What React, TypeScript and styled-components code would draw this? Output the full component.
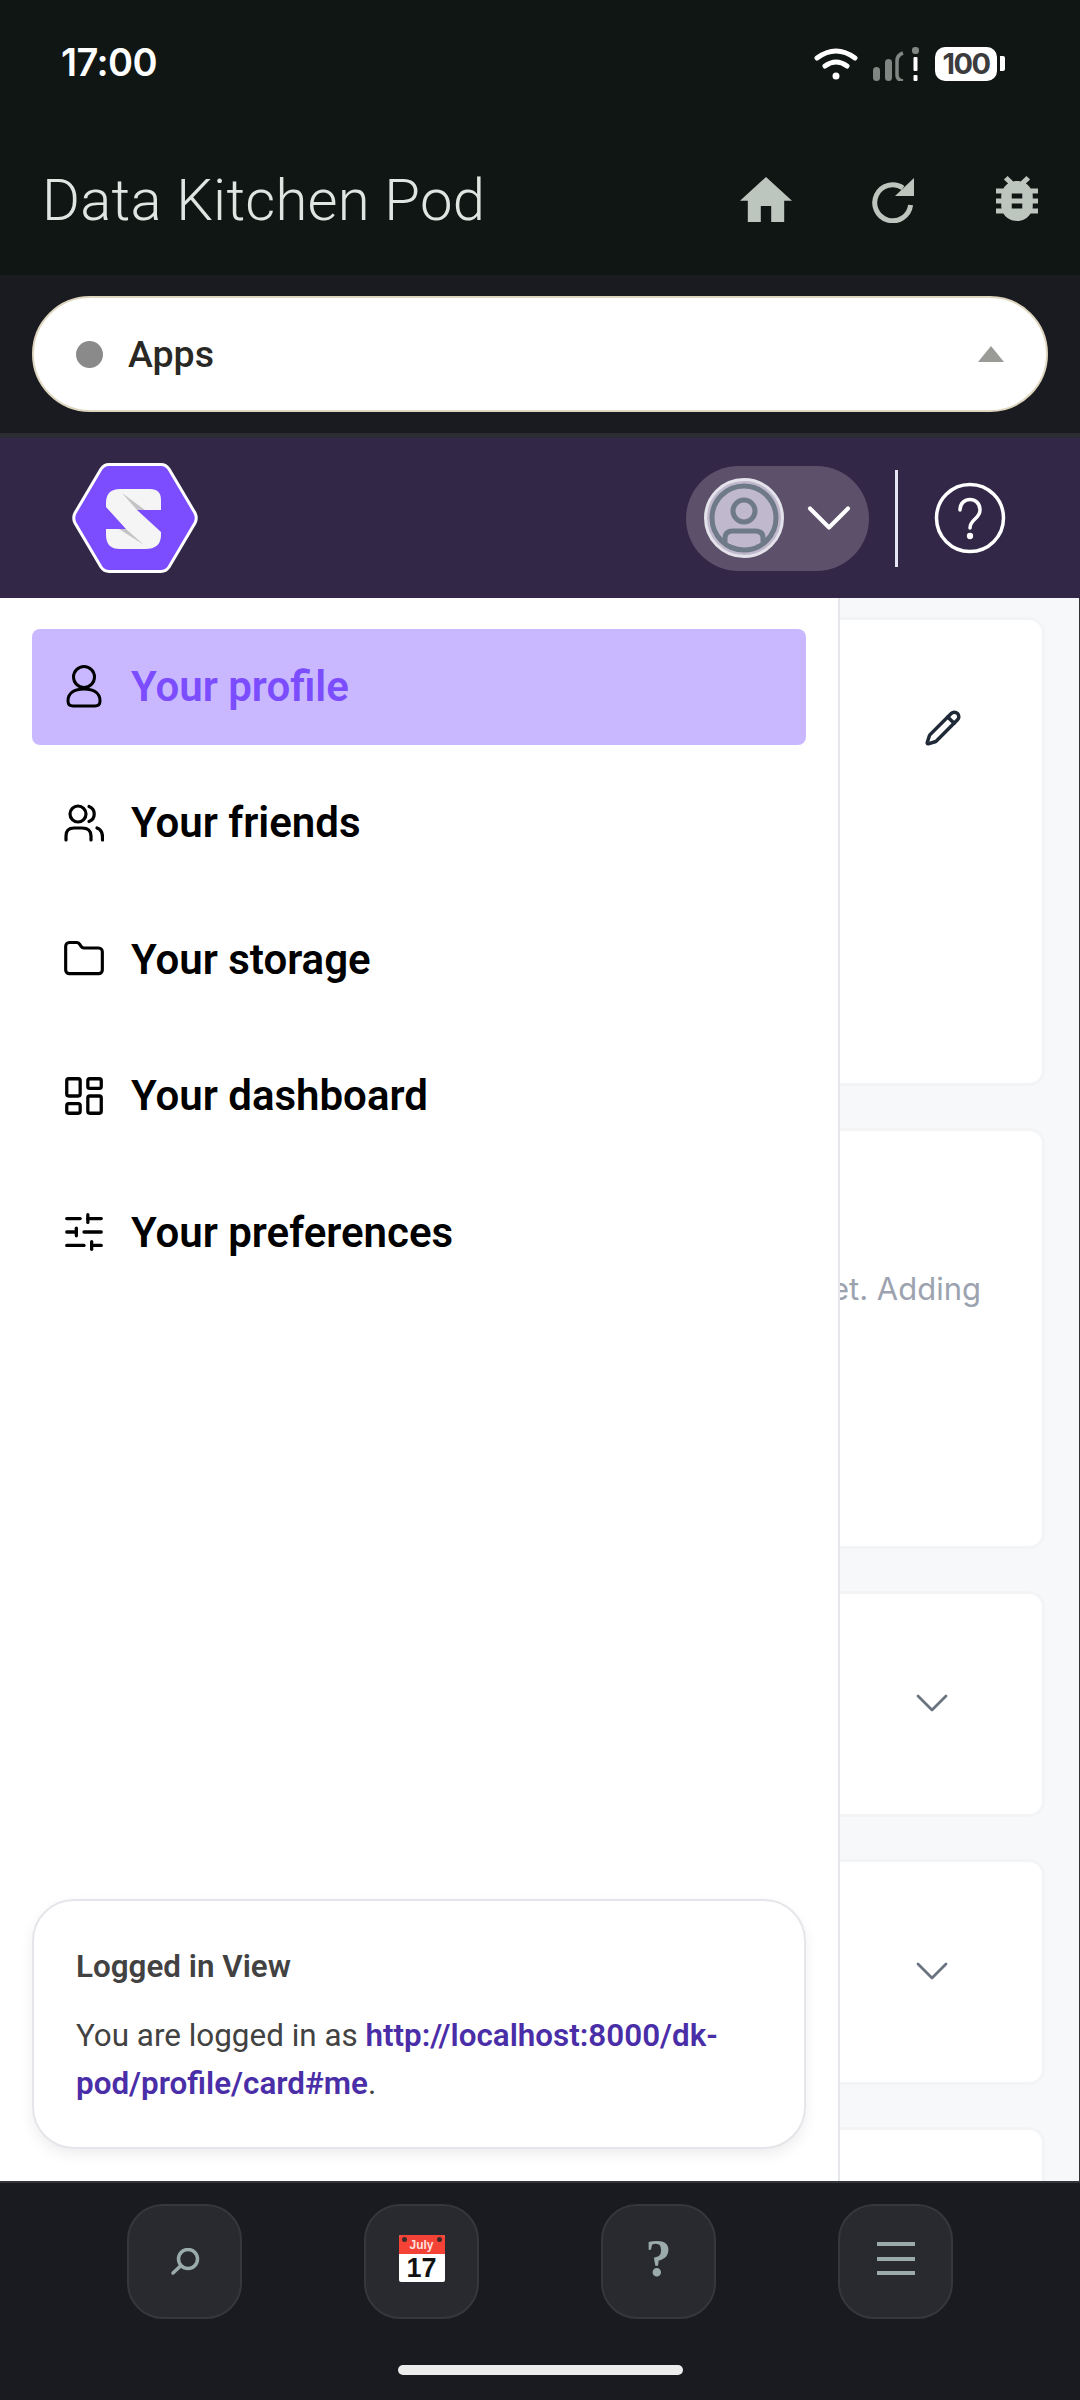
import React from "react";
import styled, { createGlobalStyle } from "styled-components";
import { Pencil, ChevronDown, Folder, LayoutDashboard, SlidersHorizontal } from "lucide-react";

const Global = createGlobalStyle`
  html, body { margin: 0; padding: 0; background: #1a1b20; }
  * { box-sizing: border-box; }
  body { font-family: Roboto, "Liberation Sans", sans-serif; }
`;

const Page = styled.div`
  width: 1080px; height: 2400px; display: flex; flex-direction: column; overflow: hidden;
`;
const TopBlock = styled.header`
  height: 275px; background: #101613; display: flex; flex-direction: column; flex: none;
`;
const StatusBar = styled.div`
  height: 124px; padding: 0 75px 0 61px; display: flex; align-items: center; justify-content: space-between;
`;
const Time = styled.span`
  font-family: Inter, sans-serif; font-size: 38px; font-weight: 600; color: #fff; letter-spacing: -0.6px;
`;
const StatusIcons = styled.div`
  display: flex; align-items: center; gap: 15px; margin-top: 3px;
`;
const Battery = styled.div`
  display: flex; align-items: center; gap: 3px; margin-left: 1px;
`;
const BatteryBody = styled.span`
  width: 62px; height: 34px; border-radius: 10px; background: #fff; color: #3c3c3e;
  font-family: Inter, sans-serif; font-size: 29px; font-weight: 700; letter-spacing: -1.5px;
  display: flex; align-items: center; justify-content: center;
`;
const BatteryCap = styled.span`
  width: 5px; height: 15px; background: #fff; border-radius: 0 2px 2px 0;
`;
const TitleBar = styled.div`
  height: 151px; padding: 0 42px 0 42px; display: flex; align-items: center; justify-content: space-between;
`;
const Title = styled.h1`
  margin: 0; font-size: 58px; font-weight: 300; color: #dfe5e0; letter-spacing: 0.25px;
`;
const TitleIcons = styled.div`
  display: flex; align-items: center; gap: 80px;
`;
const SelectStrip = styled.div`
  height: 163px; flex: none; background: #1a1b20; padding: 21px 32px 0;
  border-bottom: 5px solid #2b2d32;
`;
const SelectPill = styled.div`
  height: 116px; border-radius: 58px; background: #fff; border: 2px solid #ded6bf;
  padding: 0 42px; display: flex; align-items: center;
`;
const Dot = styled.span`
  width: 27px; height: 27px; border-radius: 50%; background: #8a8a8a; margin-right: 25px;
`;
const SelectLabel = styled.span`
  font-size: 37.5px; font-weight: 500; color: #2a2824; flex: 1;
`;
const Caret = styled.span`
  width: 0; height: 0; border-left: 13px solid transparent; border-right: 13px solid transparent;
  border-bottom: 16px solid #9a9a96;
`;
const PurpleHeader = styled.div`
  height: 160px; flex: none; background: #332748; padding: 0 74px 0 72px;
  display: flex; align-items: center;
`;
const ProfilePill = styled.div`
  width: 183px; height: 105px; border-radius: 53px; background: #5d506b; margin-left: auto;
  display: flex; align-items: center; padding-left: 18px; gap: 7px;
`;
const Divider = styled.span`
  width: 3px; height: 97px; background: #e6e6f2; margin: 0 36px 0 26px;
`;
const Body = styled.div`
  flex: 1; position: relative; overflow: hidden; background: #f7f8fa;
  border-right: 1px solid #333; padding: 19px 34px 0 20px; display: flex; flex-direction: column; gap: 42px;
`;
const Card = styled.section<{ $h: number }>`
  height: ${(p) => p.$h}px; flex: none; background: #fff; border: 3px solid #f3f4f6; border-radius: 16px;
  display: flex; justify-content: flex-end; position: relative;
`;
const EditSlot = styled.div`
  padding: 89px 80px 0 0; color: #1f2937; display: flex;
`;
const NoteText = styled.p`
  margin: 0; padding: 136px 61px 0 0; font-family: Inter, sans-serif; font-size: 31px; color: #9ca3af; white-space: nowrap; line-height: 44px;
`;
const ChevronSlot = styled.div`
  padding-right: 82px; color: #6b7280; display: flex; align-items: center; margin-bottom: 3px;
`;
const Drawer = styled.aside`
  position: absolute; left: 0; top: 0; bottom: 0; width: 840px; background: #fff;
  border-right: 2px solid #e5e7eb; padding: 31px 32px 32px; display: flex; flex-direction: column;
`;
const NavList = styled.nav`
  display: flex; flex-direction: column; gap: 20.5px;
`;
const NavItem = styled.a<{ $active?: boolean }>`
  height: 116px; border-radius: 8px; padding: 0 0 2px 33px; display: flex; align-items: center; gap: 28px;
  background: ${(p) => (p.$active ? "#c9b8ff" : "transparent")};
  color: ${(p) => (p.$active ? "#7c4dff" : "#000")};
  font-size: 42px; font-weight: 600;
`;
const NavIcon = styled.span`
  width: 38px; height: 44px; color: #000; display: flex; align-items: center; justify-content: center; flex: none;
  svg { flex: none; }
`;
const LoginCard = styled.div`
  margin-top: auto; height: 250px; border: 2px solid #e5e5ea; border-radius: 42px; background: #fff;
  padding: 46px 42px 0; box-shadow: 0 6px 14px rgba(0,0,0,0.07); color: #424242;
`;
const LoginTitle = styled.h2`
  margin: 0 0 25px; font-size: 31.4px; line-height: 40px; font-weight: 600; color: #424242;
`;
const LoginText = styled.p`
  margin: 0; font-size: 31.4px; line-height: 48px; font-weight: 400;
`;
const LoginLink = styled.a`
  color: #4a2ea8; font-weight: 600;
`;
const BottomBar = styled.footer`
  height: 219px; flex: none; background: #1a1b20; border-top: 2px solid #33353a; display: flex; flex-direction: column; align-items: center;
`;
const BottomRow = styled.div`
  width: 100%; padding: 21px 0 0 127px; display: flex; gap: 122px;
`;
const BottomButton = styled.button`
  width: 115px; height: 115px; border-radius: 36px; border: 2px solid #35373c; background: #292a2f; padding: 0;
  display: flex; align-items: center; justify-content: center; color: #9aabaa; flex: none;
`;
const QuestionGlyph = styled.span`
  font-family: "Liberation Serif", serif; font-weight: 700; font-size: 52px; line-height: 1; margin-bottom: 6px;
`;
const Calendar = styled.div`
  width: 46px; height: 47px; border-radius: 2px; background: #fff; position: relative; display: flex; flex-direction: column; margin-bottom: 7px;
`;
const CalRing = styled.span<{ $side: "left" | "right" }>`
  position: absolute; top: 2px; ${(p) => p.$side}: 3px; width: 5px; height: 5px; border-radius: 50%; background: #3a2a2a;
`;
const CalTop = styled.div`
  height: 19px; background: #f44336; color: #ffe0dd; font-size: 12px; font-weight: 600; line-height: 20px; text-align: center; border-radius: 2px 2px 0 0;
`;
const CalDay = styled.div`
  flex: 1; color: #111; font-size: 27px; font-weight: 600; line-height: 28px; text-align: center;
`;
const MenuWrap = styled.span`
  display: flex; margin-bottom: 6px;
`;
const HomeIndicator = styled.div`
  width: 285px; height: 10px; border-radius: 5px; background: #ececec; margin-top: 46px;
`;

const Logo = () => (
  <svg width="126" height="112" viewBox="72 463 126 112">
    <path d="M109 465.5 H161 Q166 465.5 169 470 L195 514 Q197.5 519 195 524 L169 568 Q166 572.5 161 572.5 H109 Q104 572.5 101 568 L75 524 Q72.5 519 75 514 L101 470 Q104 465.5 109 465.5Z" fill="#7c4dff" stroke="#fff" strokeWidth="3" />
    <path d="M120 490 H150 Q161 490 161 501 V511 H137 L161 533 V536 Q161 550 145 550 H120 Q106 550 106 536 V530 H126 L106 508 V504 Q106 490 120 490Z" fill="#f5f5f5" />
    <path d="M122 494 L145 511 H137Z M126 530 L144 546 L119 530Z" fill="#c4c4c6" />
  </svg>
);

const Avatar = () => (
  <svg width="80" height="80" viewBox="0 0 80 80" style={{ flex: "none" }}>
    <circle cx="40" cy="40" r="38.5" fill="#c0b8cc" stroke="#e4e2ea" strokeWidth="3" />
    <circle cx="40" cy="40" r="32" fill="none" stroke="#6f7a88" strokeWidth="5" />
    <circle cx="40" cy="33" r="11" fill="none" stroke="#6f7a88" strokeWidth="5" />
    <path d="M21 64 V60 Q21 53 29 53 H51 Q59 53 59 60 V64" fill="none" stroke="#6f7a88" strokeWidth="5" />
    <path d="M25 62 Q25 57 30 57 H50 Q55 57 55 62 V66 H25Z" fill="#c0b8cc" />
  </svg>
);

const HelpCircle = () => (
  <svg width="72" height="72" viewBox="0 0 72 72" fill="none" stroke="#fff" strokeWidth="3.5" strokeLinecap="round">
    <circle cx="36" cy="36" r="33.5" />
    <path d="M26 28 C26 14 46 14 46 28 C46 37 36 37 36 46" />
    <circle cx="36" cy="54" r="1.4" fill="#fff" />
  </svg>
);

const Wifi = () => (
  <svg width="44" height="34" viewBox="0 0 44 34" fill="none" stroke="#fff" strokeLinecap="round" strokeWidth="5">
    <path d="M3 11 Q22 -3 41 11" />
    <path d="M11 19 Q22 11 33 19" />
    <circle cx="22" cy="29" r="2.5" fill="#fff" strokeWidth="2" />
  </svg>
);

const Signal = () => (
  <svg width="46" height="34" viewBox="0 0 46 34">
    <rect x="0" y="20" width="7" height="14" rx="3.5" fill="#7f8783" />
    <rect x="12" y="12" width="7" height="22" rx="3.5" fill="#7f8783" />
    <path d="M30 6 Q24 8 24 14 V28 Q24 33 30 34" fill="none" stroke="#7f8783" strokeWidth="3.5" />
    <rect x="39" y="0" width="7" height="7" rx="3" fill="#7f8783" />
    <rect x="40.5" y="10" width="4" height="14" rx="1" fill="#fff" />
    <rect x="40.5" y="28" width="4" height="6" rx="1" fill="#fff" />
  </svg>
);

const HomeIcon = () => (
  <svg width="52" height="45" viewBox="2 3 20 17" preserveAspectRatio="none" fill="#bcc5be">
    <path d="M10 20v-6h4v6h5v-8h3L12 3 2 12h3v8z" />
  </svg>
);
const RefreshIcon = () => (
  <svg width="44" height="46" viewBox="0 0 44 46" fill="none">
    <path d="M38.6 28 A18 18 0 1 1 31 11" stroke="#bcc5be" strokeWidth="5" />
    <path d="M42 1 V19 H23Z" fill="#bcc5be" />
  </svg>
);
const BugIcon = () => (
  <svg width="42" height="47" viewBox="4 3 16 18.8" preserveAspectRatio="none" fill="#bcc5be">
    <path d="M14,12H10V10H14M14,16H10V14H14M20,8H17.19C16.74,7.22 16.12,6.55 15.37,6.04L17,4.41L15.59,3L13.42,5.17C12.96,5.06 12.5,5 12,5C11.5,5 11.04,5.06 10.59,5.17L8.41,3L7,4.41L8.62,6.04C7.88,6.55 7.26,7.22 6.81,8H4V10H6.09C6.04,10.33 6,10.66 6,11V12H4V14H6V15C6,15.34 6.04,15.67 6.09,16H4V18H6.81C8.47,20.87 12.14,21.84 15,20.19C15.91,19.66 16.67,18.9 17.19,18H20V16H17.91C17.96,15.67 18,15.34 18,15V14H20V12H18V11C18,10.66 17.96,10.33 17.91,10H20V8Z" />
  </svg>
);
const UserIcon = () => (
  <svg width="36" height="44" viewBox="0 0 36 44" fill="none" stroke="#000" strokeWidth="3">
    <circle cx="18" cy="13" r="10.5" />
    <path d="M2 37 C2 28 10 25 18 25 C26 25 34 28 34 37 C34 41 32 42 29 42 H7 C4 42 2 41 2 37Z" />
  </svg>
);
const FriendsIcon = () => (
  <svg width="40" height="40" viewBox="0 0 40 40" fill="none" stroke="#000" strokeWidth="3.2" strokeLinecap="round">
    <circle cx="14" cy="11" r="8" />
    <path d="M25 3.5 A8 8 0 0 1 25 18.5" />
    <path d="M2 37 V33 Q2 25 10 25 H18 Q27 25 27 33 V37" />
    <path d="M33 25 Q38.5 27 38.5 34 V37" />
  </svg>
);
const SearchIcon = () => (
  <svg width="30" height="28" viewBox="0 0 30 28" fill="none" stroke="#9aabaa" strokeLinecap="round" strokeWidth="3.5">
    <circle cx="18" cy="11" r="9.5" />
    <path d="M10.5 18 L3 25" />
  </svg>
);
const MenuIcon = () => (
  <svg width="38" height="36" viewBox="0 0 38 36" fill="#9aabaa">
    <rect y="1" width="38" height="4" />
    <rect y="16" width="38" height="4" />
    <rect y="30" width="38" height="4" />
  </svg>
);

const navItems = [
  { label: "Your profile", icon: <UserIcon />, active: true },
  { label: "Your friends", icon: <FriendsIcon /> },
  { label: "Your storage", icon: <Folder size={44} strokeWidth={1.7} /> },
  { label: "Your dashboard", icon: <LayoutDashboard size={46} strokeWidth={1.7} /> },
  { label: "Your preferences", icon: <SlidersHorizontal size={46} strokeWidth={1.7} /> },
];

export default function App() {
  return (
    <Page>
      <Global />
      <TopBlock>
        <StatusBar>
          <Time>17:00</Time>
          <StatusIcons>
            <Wifi />
            <Signal />
            <Battery>
              <BatteryBody>100</BatteryBody>
              <BatteryCap />
            </Battery>
          </StatusIcons>
        </StatusBar>
        <TitleBar>
          <Title>Data Kitchen Pod</Title>
          <TitleIcons>
            <HomeIcon />
            <RefreshIcon />
            <BugIcon />
          </TitleIcons>
        </TitleBar>
      </TopBlock>
      <SelectStrip>
        <SelectPill>
          <Dot />
          <SelectLabel>Apps</SelectLabel>
          <Caret />
        </SelectPill>
      </SelectStrip>
      <PurpleHeader>
        <Logo />
        <ProfilePill>
          <Avatar />
          <ChevronDown size={76} color="#fff" strokeWidth={1.3} />
        </ProfilePill>
        <Divider />
        <HelpCircle />
      </PurpleHeader>
      <Body>
        <Card $h={469}>
          <EditSlot>
            <Pencil size={38} strokeWidth={2.2} />
          </EditSlot>
        </Card>
        <Card $h={421}>
          <NoteText>Your pod has no items yet. Adding</NoteText>
        </Card>
        <Card $h={226}>
          <ChevronSlot>
            <ChevronDown size={56} strokeWidth={1.2} />
          </ChevronSlot>
        </Card>
        <Card $h={226}>
          <ChevronSlot>
            <ChevronDown size={56} strokeWidth={1.2} />
          </ChevronSlot>
        </Card>
        <Card $h={226} />
        <Drawer>
          <NavList>
            {navItems.map((item) => (
              <NavItem key={item.label} $active={item.active}>
                <NavIcon>{item.icon}</NavIcon>
                {item.label}
              </NavItem>
            ))}
          </NavList>
          <LoginCard>
            <LoginTitle>Logged in View</LoginTitle>
            <LoginText>
              You are logged in as <LoginLink>http://localhost:8000/dk-pod/profile/card#me</LoginLink>.
            </LoginText>
          </LoginCard>
        </Drawer>
      </Body>
      <BottomBar>
        <BottomRow>
          <BottomButton aria-label="Search"><SearchIcon /></BottomButton>
          <BottomButton aria-label="Calendar">
            <Calendar>
              <CalRing $side="left" />
              <CalRing $side="right" />
              <CalTop>July</CalTop>
              <CalDay>17</CalDay>
            </Calendar>
          </BottomButton>
          <BottomButton aria-label="Help"><QuestionGlyph>?</QuestionGlyph></BottomButton>
          <BottomButton aria-label="Menu"><MenuWrap><MenuIcon /></MenuWrap></BottomButton>
        </BottomRow>
        <HomeIndicator />
      </BottomBar>
    </Page>
  );
}
